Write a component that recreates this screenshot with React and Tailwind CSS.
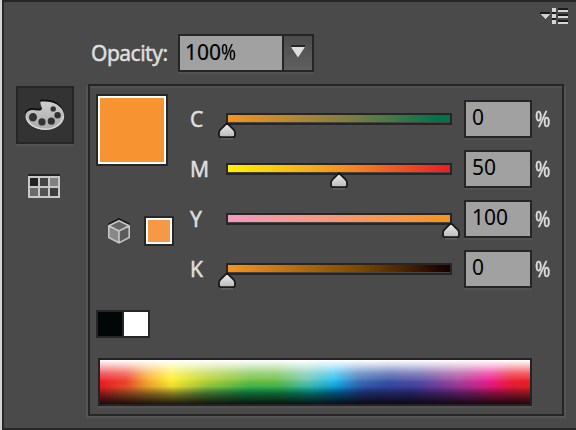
const channels = [
  { name: 'C', value: 0, track: 'bg-[linear-gradient(90deg,#f7931e_0%,#7d7c42_55%,#00744a_95%)]' },
  { name: 'M', value: 50, track: 'bg-[linear-gradient(90deg,#fff200_0%,#f7931e_50%,#ed1c24_100%)]' },
  { name: 'Y', value: 100, track: 'bg-[linear-gradient(90deg,#f49ac1_0%,#f7976a_55%,#f7931e_100%)]' },
  { name: 'K', value: 0, track: 'bg-[linear-gradient(90deg,#f7931e_0%,#7a4700_60%,#1c0000_98%)]' },
];

function Thumb({ value }) {
  return (
    <svg
      className="absolute top-[7px] h-[18px] w-[18px]"
      style={{ left: -10 + (value * 224) / 100 }}
      viewBox="0 0 18 18"
    >
      <defs>
        <linearGradient id="thumb" x1="0" y1="0" x2="0" y2="1">
          <stop offset="0" stopColor="#f0f0f0" />
          <stop offset="1" stopColor="#b9b9b9" />
        </linearGradient>
      </defs>
      <path d="M3 16.8h12" stroke="#606060" strokeWidth="1.6" />
      <path
        d="M9 1.2 15.6 7.6Q17 9 17 10.5V13.2Q17 15.1 15 15.1H3Q1 15.1 1 13.2V10.5Q1 9 2.4 7.6Z"
        fill="url(#thumb)"
        stroke="#181818"
        strokeWidth="1.8"
        strokeLinejoin="round"
      />
    </svg>
  );
}

function ChannelRow({ name, value, track }) {
  return (
    <div className="flex h-[50px] items-start">
      <div className="w-[36px] pt-[5px] text-[21px] leading-[28px] text-[#dedede] [-webkit-text-stroke:0.5px_#dedede]">{name}</div>
      <div className="relative mt-[13px] h-3 w-[226px] border-2 border-[#262626] bg-[#444]">
        <div className={`h-[7px] ${track}`} />
        <Thumb value={value} />
      </div>
      <div className="ml-3 h-[38px] w-[68px] border-2 border-[#262626] bg-[#a1a1a1] pl-[6px] text-[21px] leading-[30px] text-black shadow-[0_2px_0_#525252]">
        {value}
      </div>
      <div className="ml-[3px] w-4 pt-[5px] text-[21px] leading-[28px] text-[#dedede] [-webkit-text-stroke:0.5px_#dedede]">
        <span className="inline-block origin-left scale-x-[0.88]">%</span>
      </div>
    </div>
  );
}

function PaletteIcon() {
  const shape =
    'M15 .8C19.5-.1 27 .3 32 3.7c4.5 3 7 7.3 6.9 11.8C38.700 23.500 29.500 29.300 19.500 29 9.500 28.700.5 23 .2 15.300 0 10.500 4.500 8.600 8.500 9c3.300.4 5.900 1.100 7.400.1 2-1.500-.8-3.800-.9-8.300Z';
  return (
    <svg className="h-[33px] w-[40px]" viewBox="0 0 40 33">
      <defs>
        <linearGradient id="pal" x1="0" y1="0" x2="0" y2="1">
          <stop offset="0" stopColor="#cecece" />
          <stop offset="1" stopColor="#aaa" />
        </linearGradient>
      </defs>
      <path d={shape} fill="#111" />
      <path d={shape} transform="translate(.3 2)" fill="url(#pal)" />
      <path d="M1.2 17.500C2 25 10.500 30 20 30.200S37.500 24.500 38.400 17" fill="none" stroke="#dedede" strokeWidth="1.200" />
      <g fill="#333">
        <ellipse cx="8" cy="18.300" rx="4" ry="4.300" />
        <circle cx="17" cy="22.900" r="3.600" />
        <circle cx="26.300" cy="22.200" r="3.600" />
        <circle cx="32.600" cy="16.200" r="3.200" />
        <circle cx="28.200" cy="9.900" r="2.700" />
      </g>
    </svg>
  );
}

function CubeIcon() {
  return (
    <svg className="h-[27px] w-[24px]" viewBox="0 0 24 27">
      <path d="M1 7.500V5.500L12 0 23 5.500v2Z" fill="#161616" />
      <path d="M1.800 7.800 12 2.800 22.200 7.800 12 13Z" fill="#666" />
      <path d="M1.800 7.800 12 13v11.900L1.800 19.500Z" fill="#888" />
      <path d="M22.200 7.800 12 13v11.900l10.200-5.400Z" fill="#5c5c5c" />
      <path d="M12 2.800 22.200 7.800v11.700L12 24.900 1.800 19.500V7.800ZM1.800 7.800 12 13l10.200-5.200M12 13v11.900" fill="none" stroke="#c6c6c6" strokeWidth="1.600" strokeLinejoin="round" />
    </svg>
  );
}

function Header() {
  return (
    <div className="flex h-[82px] items-start pl-[87px]">
      <div className="mt-[37px] w-[87px] text-[21px] leading-[28px] tracking-[-0.5px] text-[#dedede] [-webkit-text-stroke:0.5px_#dedede]">Opacity:</div>
      <div className="mt-8 flex h-[38px] w-[136px] border-2 border-[#262626] bg-[#a1a1a1] shadow-[0_2px_0_#525252]">
        <div className="w-[102px] pl-[5px] text-[21px] leading-[33px] text-black [-webkit-text-stroke:0.2px_black]">
          100<span className="inline-block origin-left scale-x-[0.86]">%</span>
        </div>
        <div className="flex w-[30px] items-center justify-center border-l-2 border-[#262626] bg-linear-to-b from-[#4c4c4c] to-[#606060]">
          <svg className="-mt-1 h-[13px] w-[14px]" viewBox="0 0 14 13">
            <path d="M0 0H14V3H0Z" fill="#262626" />
            <path d="M0 2H14L7 12.500Z" fill="#dedede" />
          </svg>
        </div>
      </div>
      <svg className="mt-[6px] ml-[226px] h-[16px] w-[28px]" viewBox="0 0 28 16" shapeRendering="crispEdges">
        <path d="M0 4H10V6H0Z" fill="#1c1c1c" />
        <path d="M0 6H10L5 11Z" fill="#cfcfcf" />
        <path d="M12 4h4v2h-4zM12 10h4v2h-4zM18 0h10v2H18zM18 6h10v2H18zM18 12h10v2H18z" fill="#1c1c1c" />
        <path d="M12 0h4v4h-4zM12 6h4v4h-4zM12 12h4v4h-4zM18 2h10v2H18zM18 8h10v2H18zM18 14h10v2H18z" fill="#d5d5d5" />
      </svg>
    </div>
  );
}

function Rail() {
  return (
    <div className="w-[84px] shrink-0 pt-[2px] pl-3">
      <div className="flex h-[58px] w-[58px] items-center justify-center border-2 border-[#262626] bg-[#333] shadow-[0_2px_0_#525252]">
        <PaletteIcon />
      </div>
      <div className="mt-[30px] ml-3 w-8 border-t-2 border-[#222]">
        <div className="grid grid-cols-3 gap-[2px] bg-[#c8c8c8] p-[2px]">
          <i className="h-2 bg-[#222]" />
          <i className="h-2 bg-[#444]" />
          <i className="h-2 bg-[#808080]" />
          <i className="h-2 bg-[#6a6a6a]" />
          <i className="h-2 bg-[#535353]" />
          <i className="h-2 bg-[#3c3c3c]" />
        </div>
      </div>
    </div>
  );
}

function Spectrum() {
  return (
    <div className="mt-5 ml-2 grid h-[48px] w-[434px] border-2 border-[#262223] shadow-[0_2px_0_#525252]">
      <div className="col-start-1 row-start-1 bg-[linear-gradient(90deg,#ed1c24_0%,#ef3b2b_6%,#f9a72b_11%,#fff02a_16.500%,#c0d532_24%,#72bf44_35%,#70bf48_41%,#6fc6b0_48%,#26bff2_54.500%,#3f74b9_60%,#3a53a4_67%,#5a4fa2_75%,#a5489b_83%,#ee1c92_90.500%,#ed1c2e_96%,#ed1c24_100%)]" />
      <div className="col-start-1 row-start-1 bg-[linear-gradient(90deg,#d81f26_0%,#d08a2c_10%,#d6c934_17%,#60b045_25%,#0fa850_34%,#12a551_42%,#00a79d_49%,#0072bc_56%,#263d96_62%,#2e3192_72%,#662d91_80%,#92278f_85%,#d3145a_92%,#d81f26_100%)] mask-[linear-gradient(180deg,transparent_45%,black_75%)]" />
      <div className="relative col-start-1 row-start-1 bg-[linear-gradient(180deg,#fff_0%,rgba(255,255,255,0.750)_12%,rgba(255,255,255,0.300)_30%,rgba(255,255,255,0)_50%,rgba(10,5,8,0)_60%,rgba(10,5,8,0.450)_78%,rgba(10,5,8,0.900)_100%)]" />
    </div>
  );
}

export default function App() {
  return (
    <div className="h-[430px] w-[576px] overflow-hidden bg-[#d4d4d4] pl-[2px] font-['Noto_Sans','Open_Sans',sans-serif]">
      <div className="h-[430px] border-y-2 border-l-2 border-[#262626] bg-[#4a4a4a]">
        <Header />
        <div className="flex">
          <Rail />
          <div className="h-[332px] w-[476px] border-2 border-[#262626] shadow-[-2px_2px_0_#555,2px_2px_0_#555,inset_0_2px_0_#525252]">
            <div className="flex h-[224px]">
              <div className="w-[100px] pt-2 pl-[6px]">
                <div className="h-[72px] w-[72px] border-2 border-[#262626] bg-white p-[2px]">
                  <div className="h-full bg-[#f79331]" />
                </div>
                <div className="mt-[50px] ml-[11px] flex">
                  <div className="mt-[2px] h-7 w-[37px]">
                    <CubeIcon />
                  </div>
                  <div className="h-[30px] w-[30px] border-2 border-[#262626] bg-white p-[2px]">
                    <div className="h-full bg-[#f79846]" />
                  </div>
                </div>
              </div>
              <div className="pt-[14px]">
                {channels.map((c) => (
                  <ChannelRow key={c.name} {...c} />
                ))}
              </div>
            </div>
            <div className="ml-[6px] flex h-7 w-[54px] gap-[2px] border-2 border-[#262626] bg-[#262626]">
              <div className="flex-1 bg-[#020606]" />
              <div className="flex-1 bg-white" />
            </div>
            <Spectrum />
          </div>
        </div>
      </div>
    </div>
  );
}
